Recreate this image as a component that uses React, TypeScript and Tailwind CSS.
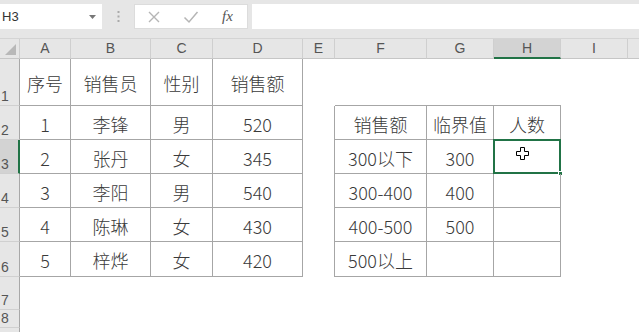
import React from "react";

const colW = [20, 51, 80, 62, 90, 32, 92, 67, 67, 67, 20];
const colNames = ["", "A", "B", "C", "D", "E", "F", "G", "H", "I", ""];
const rowH = [47, 34, 34, 34, 34, 35, 33, 18, 18];

const data: Record<string, string> = {
  "1,1": "序号", "1,2": "销售员", "1,3": "性别", "1,4": "销售额",
  "2,1": "1", "2,2": "李锋", "2,3": "男", "2,4": "520",
  "3,1": "2", "3,2": "张丹", "3,3": "女", "3,4": "345",
  "4,1": "3", "4,2": "李阳", "4,3": "男", "4,4": "540",
  "5,1": "4", "5,2": "陈琳", "5,3": "女", "5,4": "430",
  "6,1": "5", "6,2": "梓烨", "6,3": "女", "6,4": "420",
  "2,6": "销售额", "2,7": "临界值", "2,8": "人数",
  "3,6": "300以下", "3,7": "300",
  "4,6": "300-400", "4,7": "400",
  "5,6": "400-500", "5,7": "500",
  "6,6": "500以上",
};

const inTable = (r: number, c: number) =>
  (r >= 1 && r <= 6 && c >= 1 && c <= 4) || (r >= 2 && r <= 6 && c >= 6 && c <= 8);

const font = { fontFamily: '"Noto Sans CJK SC", "Noto Sans", sans-serif' };

function Cursor() {
  return (
    <svg width="13" height="13" viewBox="0 0 13 13" className="absolute left-[22px] top-[7px]">
      <path
        d="M4.5 0.5 H8.5 V4.5 H12.5 V8.5 H8.5 V12.5 H4.5 V8.5 H0.5 V4.5 H4.5 Z"
        fill="#fff"
        stroke="#000"
        strokeWidth="1"
      />
    </svg>
  );
}

export default function App() {
  return (
    <div className="w-[639px] h-[332px] overflow-hidden bg-white" style={font}>
      {/* formula bar */}
      <div className="h-[39px] bg-[#e6e6e6] flex items-start pt-[4px] border-b border-[#d4d4d4]">
        <div className="w-[102px] h-[25px] bg-white flex items-center justify-between pl-[2px] pr-[6px]">
          <span className="text-[13px] text-[#333]" style={{ fontFamily: '"Liberation Sans", sans-serif' }}>H3</span>
          <svg width="7" height="4" viewBox="0 0 7 4"><path d="M0 0 H7 L3.5 4 Z" fill="#777" /></svg>
        </div>
        <div className="w-[32px] h-[25px] flex items-center justify-center">
          <svg width="3" height="11" viewBox="0 0 3 11">
            <rect x="0.5" y="0" width="2" height="2" fill="#aaa" />
            <rect x="0.5" y="4.5" width="2" height="2" fill="#aaa" />
            <rect x="0.5" y="9" width="2" height="2" fill="#aaa" />
          </svg>
        </div>
        <div className="w-[114px] h-[25px] bg-white border border-[#dcdcdc] flex items-center">
          <svg width="14" height="14" viewBox="0 0 14 14" className="ml-[12px]">
            <path d="M2 2 L12 12 M12 2 L2 12" stroke="#b5b5b5" strokeWidth="1.4" />
          </svg>
          <svg width="16" height="14" viewBox="0 0 16 14" className="ml-[22px]">
            <path d="M1.5 7.5 L6 12 L14.5 2" stroke="#b5b5b5" strokeWidth="1.5" fill="none" />
          </svg>
          <span
            className="ml-[23px] text-[15px] italic text-[#555]"
            style={{ fontFamily: '"Liberation Serif", serif' }}
          >
            fx
          </span>
        </div>
        <div className="ml-[4px] flex-1 h-[25px] bg-white" />
      </div>

      {/* column headers */}
      <div className="flex h-[20px]">
        {colW.map((w, c) => {
          const sel = c === 8;
          return (
            <div
              key={c}
              style={{ width: w }}
              className={`shrink-0 h-full box-border border-r border-[#cfcfcf] flex items-center justify-center text-[14px] text-[#555] relative ${
                sel ? "bg-[#d3d3d3] border-b-2 border-b-[#217346]" : "bg-[#e6e6e6] border-b border-b-[#c6c6c6]"
              }`}
            >
              {c === 0 ? (
                <svg width="11" height="11" viewBox="0 0 11 11" className="absolute right-[3px] bottom-[3px]">
                  <path d="M11 0 V11 H0 Z" fill="#b8b8b8" />
                </svg>
              ) : (
                <span style={{ fontFamily: '"Liberation Sans", sans-serif' }} className="font-light">
                  {colNames[c]}
                </span>
              )}
            </div>
          );
        })}
      </div>

      {/* rows */}
      {rowH.map((h, ri) => {
        const r = ri + 1;
        return (
          <div key={r} className="flex" style={{ height: h }}>
            {colW.map((w, c) => {
              if (c === 0) {
                const sel = r === 3;
                return (
                  <div
                    key={c}
                    style={{ width: w, fontFamily: '"Liberation Sans", sans-serif' }}
                    className={`shrink-0 h-full box-border border-b border-b-[#d0d0d0] flex items-end pl-[1px] pb-[1px] text-[14px] leading-[16px] text-[#555] ${
                      sel ? "bg-[#d3d3d3] border-r-2 border-r-[#217346]" : "bg-[#e6e6e6] border-r border-r-[#a8a8a8]"
                    }`}
                  >
                    {r <= 8 ? r : ""}
                  </div>
                );
              }
              const br = inTable(r, c) || inTable(r, c + 1);
              const bb = inTable(r, c) || inTable(r + 1, c);
              const txt = data[`${r},${c}`];
              const isSel = r === 3 && c === 8;
              return (
                <div
                  key={c}
                  style={{ width: w }}
                  className={`shrink-0 h-full box-border relative flex items-center justify-center pt-[3px] text-[18px] font-light text-[#3a3a3a] ${
                    br ? "border-r border-r-[#a6a6a6]" : ""
                  } ${bb ? "border-b border-b-[#a6a6a6]" : ""}`}
                >
                  {txt}
                  {isSel && (
                    <>
                      <div className="absolute -left-[1px] -top-[1px] -right-[1px] -bottom-[1px] border-2 border-[#217346]" />
                      <div className="absolute -right-[3px] -bottom-[3px] w-[5px] h-[5px] bg-[#217346] border border-white" />
                      <Cursor />
                    </>
                  )}
                </div>
              );
            })}
          </div>
        );
      })}
    </div>
  );
}
